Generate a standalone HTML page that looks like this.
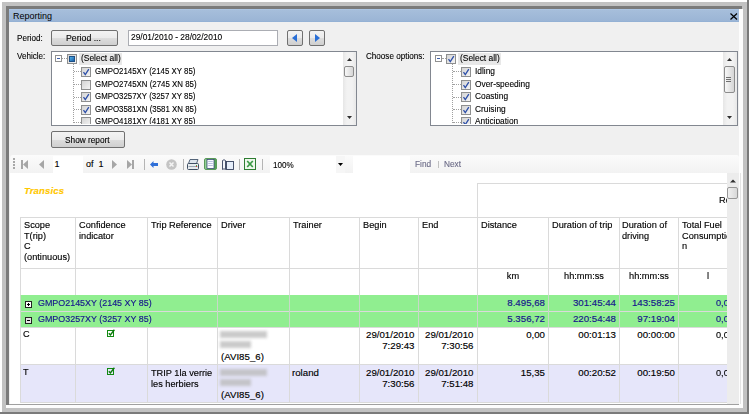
<!DOCTYPE html><html><head><meta charset="utf-8"><style>
*{margin:0;padding:0;box-sizing:border-box;}
html,body{width:749px;height:414px;overflow:hidden;background:#fff;}
body{position:relative;font-family:"Liberation Sans",sans-serif;color:#000;}
.a{position:absolute;}
.t{position:absolute;white-space:nowrap;line-height:1;transform-origin:0 0;}
.ui{font-size:9px;-webkit-text-stroke-width:0.12px;}
.btn{position:absolute;border:1px solid #707070;border-radius:2px;background:linear-gradient(#f3f3f3 0%,#ebebeb 50%,#dddddd 51%,#cfcfcf 100%);}
.box{position:absolute;background:#fff;border:1px solid #abadb3;}
.cb{position:absolute;width:10px;height:10px;border:1px solid #8e8f8f;background:linear-gradient(135deg,#d4d4d4,#f4f4f4);}
.cb svg{position:absolute;left:0px;top:0px;}
svg{display:block;}
.exp{position:absolute;width:7px;height:7px;border:1px solid #919191;background:#fff;}
.exp i{position:absolute;left:1px;top:2px;width:3px;height:1px;background:#3c5ea8;}
.vl{position:absolute;width:0;border-left:1px dotted #a0a0a0;}
.hl{position:absolute;height:0;border-top:1px dotted #a0a0a0;}
.g{position:absolute;background:#d3d3d3;}
.tb{position:absolute;white-space:nowrap;line-height:10.7px;font-size:9.7px;-webkit-text-stroke-width:0.15px;transform-origin:0 0;}
</style></head><body>
<div class="a" style="left:2px;top:2px;width:745px;height:410px;background:#c2c2c2;"></div>
<div class="a" style="left:747px;top:0;width:2px;height:414px;background:#7a7a7a;"></div>
<div class="a" style="left:0;top:412px;width:749px;height:2px;background:#7a7a7a;"></div>
<div class="a" style="left:6px;top:6px;width:736px;height:3px;background:#7b7b7b;"></div>
<div class="a" style="left:6px;top:6px;width:3px;height:399px;background:#7b7b7b;"></div>
<div class="a" style="left:739px;top:9px;width:4px;height:399px;background:#fdfdfd;"></div>
<div class="a" style="left:6px;top:405px;width:736px;height:3px;background:#fdfdfd;"></div>
<div class="a" style="left:9px;top:9px;width:730px;height:396px;background:#f0f0f0;"></div>
<div class="a" style="left:9px;top:9px;width:730px;height:13px;background:linear-gradient(#b2ccec 0px,#a6bedb 1px,#9bb5d5 12px,#8eaed4 13px);"></div>
<div class="t t" style="left:13px;top:12px;font-size:9px;">Reporting</div>
<svg class="a" style="left:730px;top:13px" width="8" height="7" viewBox="0 0 8 7"><path d="M0.5 0.5L7 6.5M7 0.5L0.5 6.5" stroke="#000" stroke-width="1.2"/></svg>
<div class="t ui" style="left:17px;top:34px;transform:scaleX(0.9);">Period:</div>
<div class="btn" style="left:51px;top:30px;width:67px;height:16px;"></div>
<div class="t ui" style="left:66px;top:34px;transform:scaleX(0.97);">Period ...</div>
<div class="box" style="left:128px;top:30px;width:150px;height:16px;"></div>
<div class="t ui" style="left:131px;top:33px;transform:scaleX(0.93);">29/01/2010 - 28/02/2010</div>
<div class="btn" style="left:287px;top:30px;width:16px;height:16px;"></div>
<svg class="a" style="left:292px;top:34px" width="6" height="8"><path d="M5 0L0 4L5 8Z" fill="#2a6fd6"/></svg>
<div class="btn" style="left:309px;top:30px;width:16px;height:16px;"></div>
<svg class="a" style="left:315px;top:34px" width="6" height="8"><path d="M0 0L5 4L0 8Z" fill="#2a6fd6"/></svg>
<div class="t ui" style="left:17px;top:52px;transform:scaleX(0.9);">Vehicle:</div>
<div class="t ui" style="left:365.5px;top:52px;transform:scaleX(0.9);">Choose options:</div>
<div class="box" style="left:51px;top:51px;width:306px;height:75px;border-color:#828790;overflow:hidden;"></div>
<div class="a" style="left:52px;top:52px;width:304px;height:72px;overflow:hidden;">
<div class="exp" style="left:3px;top:3px;"><i></i></div>
<div class="hl" style="left:10px;top:6px;width:5px;"></div>
<div class="a" style="left:27px;top:1px;width:43px;height:12px;background:#e8e8e8;"></div>
<div class="cb" style="left:15px;top:2px;"><div class="a" style="left:1px;top:1px;width:6px;height:6px;background:linear-gradient(135deg,#4fb0e8,#1a5fa8);border:1px solid #1d4f86;"></div></div>
<div class="t ui" style="left:29px;top:2px;transform:scaleX(0.935);">(Select all)</div>
<div class="vl" style="left:21px;top:12px;height:75px;"></div>
<div class="hl" style="left:22px;top:19px;width:7px;"></div>
<div class="cb" style="left:29px;top:15px;"><svg width="8" height="8" viewBox="0 0 8 8"><path d="M1.5 4.2L3.3 6.6L6.8 1.2" stroke="#2d4fa8" stroke-width="1.3" fill="none"/></svg></div>
<div class="t ui" style="left:43px;top:15px;transform:scaleX(0.875);">GMPO2145XY (2145 XY 85)</div>
<div class="hl" style="left:22px;top:32px;width:7px;"></div>
<div class="cb" style="left:29px;top:28px;"></div>
<div class="t ui" style="left:43px;top:28px;transform:scaleX(0.875);">GMPO2745XN (2745 XN 85)</div>
<div class="hl" style="left:22px;top:45px;width:7px;"></div>
<div class="cb" style="left:29px;top:40px;"><svg width="8" height="8" viewBox="0 0 8 8"><path d="M1.5 4.2L3.3 6.6L6.8 1.2" stroke="#2d4fa8" stroke-width="1.3" fill="none"/></svg></div>
<div class="t ui" style="left:43px;top:40px;transform:scaleX(0.875);">GMPO3257XY (3257 XY 85)</div>
<div class="hl" style="left:22px;top:57px;width:7px;"></div>
<div class="cb" style="left:29px;top:53px;"><svg width="8" height="8" viewBox="0 0 8 8"><path d="M1.5 4.2L3.3 6.6L6.8 1.2" stroke="#2d4fa8" stroke-width="1.3" fill="none"/></svg></div>
<div class="t ui" style="left:43px;top:53px;transform:scaleX(0.875);">GMPO3581XN (3581 XN 85)</div>
<div class="hl" style="left:22px;top:70px;width:7px;"></div>
<div class="cb" style="left:29px;top:65px;"></div>
<div class="t ui" style="left:43px;top:65px;transform:scaleX(0.875);">GMPO4181XY (4181 XY 85)</div>
</div>
<div class="a" style="left:343px;top:52px;width:13px;height:73px;background:linear-gradient(90deg,#e6e6e6,#f2f2f2 30%,#f2f2f2 70%,#e8e8e8);"></div>
<svg class="a" style="left:347px;top:58px" width="5" height="3"><path d="M0 3L2.5 0L5 3Z" fill="#303030"/></svg>
<svg class="a" style="left:347px;top:116px" width="5" height="3"><path d="M0 0L2.5 3L5 0Z" fill="#303030"/></svg>
<div class="a" style="left:344px;top:66px;width:10px;height:11px;border:1px solid #8c8c8c;border-radius:2px;background:linear-gradient(90deg,#f7f7f7,#e6e6e6 50%,#d6d6d6);"></div>
<div class="box" style="left:430px;top:51px;width:308px;height:75px;border-color:#828790;overflow:hidden;"></div>
<div class="a" style="left:431px;top:52px;width:306px;height:72px;overflow:hidden;">
<div class="exp" style="left:4px;top:3px;"><i></i></div>
<div class="hl" style="left:11px;top:6px;width:4px;"></div>
<div class="a" style="left:27px;top:1px;width:43px;height:12px;background:#e8e8e8;"></div>
<div class="cb" style="left:15px;top:2px;"><svg width="8" height="8" viewBox="0 0 8 8"><path d="M1.5 4.2L3.3 6.6L6.8 1.2" stroke="#2d4fa8" stroke-width="1.3" fill="none"/></svg></div>
<div class="t ui" style="left:28.5px;top:2px;transform:scaleX(0.935);">(Select all)</div>
<div class="vl" style="left:21px;top:12px;height:75px;"></div>
<div class="hl" style="left:22px;top:19px;width:8px;"></div>
<div class="cb" style="left:30px;top:15px;"><svg width="8" height="8" viewBox="0 0 8 8"><path d="M1.5 4.2L3.3 6.6L6.8 1.2" stroke="#2d4fa8" stroke-width="1.3" fill="none"/></svg></div>
<div class="t ui" style="left:43.5px;top:15px;transform:scaleX(0.93);">Idling</div>
<div class="hl" style="left:22px;top:32px;width:8px;"></div>
<div class="cb" style="left:30px;top:28px;"><svg width="8" height="8" viewBox="0 0 8 8"><path d="M1.5 4.2L3.3 6.6L6.8 1.2" stroke="#2d4fa8" stroke-width="1.3" fill="none"/></svg></div>
<div class="t ui" style="left:43.5px;top:28px;transform:scaleX(0.93);">Over-speeding</div>
<div class="hl" style="left:22px;top:45px;width:8px;"></div>
<div class="cb" style="left:30px;top:40px;"><svg width="8" height="8" viewBox="0 0 8 8"><path d="M1.5 4.2L3.3 6.6L6.8 1.2" stroke="#2d4fa8" stroke-width="1.3" fill="none"/></svg></div>
<div class="t ui" style="left:43.5px;top:40px;transform:scaleX(0.93);">Coasting</div>
<div class="hl" style="left:22px;top:57px;width:8px;"></div>
<div class="cb" style="left:30px;top:53px;"><svg width="8" height="8" viewBox="0 0 8 8"><path d="M1.5 4.2L3.3 6.6L6.8 1.2" stroke="#2d4fa8" stroke-width="1.3" fill="none"/></svg></div>
<div class="t ui" style="left:43.5px;top:53px;transform:scaleX(0.93);">Cruising</div>
<div class="hl" style="left:22px;top:70px;width:8px;"></div>
<div class="cb" style="left:30px;top:65px;"><svg width="8" height="8" viewBox="0 0 8 8"><path d="M1.5 4.2L3.3 6.6L6.8 1.2" stroke="#2d4fa8" stroke-width="1.3" fill="none"/></svg></div>
<div class="t ui" style="left:43.5px;top:65px;transform:scaleX(0.93);">Anticipation</div>
</div>
<div class="a" style="left:723px;top:52px;width:14px;height:73px;background:linear-gradient(90deg,#e6e6e6,#f2f2f2 30%,#f2f2f2 70%,#e8e8e8);"></div>
<svg class="a" style="left:727px;top:58px" width="5" height="3"><path d="M0 3L2.5 0L5 3Z" fill="#303030"/></svg>
<svg class="a" style="left:727px;top:116px" width="5" height="3"><path d="M0 0L2.5 3L5 0Z" fill="#303030"/></svg>
<div class="a" style="left:724px;top:66px;width:11px;height:27px;border:1px solid #8c8c8c;border-radius:2px;background:linear-gradient(90deg,#f7f7f7,#e6e6e6 50%,#d6d6d6);"></div>
<div class="a" style="left:726px;top:77px;width:5px;height:1px;background:#707070;"></div>
<div class="a" style="left:726px;top:79px;width:5px;height:1px;background:#707070;"></div>
<div class="a" style="left:726px;top:81px;width:5px;height:1px;background:#707070;"></div>
<div class="btn" style="left:51px;top:131px;width:74px;height:17px;"></div>
<div class="t ui" style="left:65px;top:136px;transform:scaleX(0.92);">Show report</div>
<div class="a" style="left:10px;top:155px;width:729px;height:18px;background:linear-gradient(#f9f9f9,#f3f3f3);border-radius:3px 3px 0 0;"></div>
<div class="a" style="left:10px;top:173px;width:729px;height:231px;background:#fff;"></div>
<div class="a" style="left:9px;top:404px;width:730px;height:1px;background:#a0a0a0;"></div>
<div class="a" style="left:11px;top:155px;width:728px;height:18px;background:linear-gradient(#fbfbfb,#f2f2f2);border-radius:3px 3px 0 0;"></div>
<div class="a" style="left:13px;top:158px;width:2px;height:2px;background:#a8a8a8;"></div>
<div class="a" style="left:13px;top:161px;width:2px;height:2px;background:#a8a8a8;"></div>
<div class="a" style="left:13px;top:164px;width:2px;height:2px;background:#a8a8a8;"></div>
<div class="a" style="left:13px;top:167px;width:2px;height:2px;background:#a8a8a8;"></div>
<div class="a" style="left:21px;top:160px;width:2px;height:9px;background:#a6a6a6;"></div>
<svg class="a" style="left:23px;top:160px" width="5" height="9"><path d="M5 0L0 4.5L5 9Z" fill="#a6a6a6"/></svg>
<svg class="a" style="left:39px;top:160px" width="5" height="9"><path d="M5 0L0 4.5L5 9Z" fill="#a6a6a6"/></svg>
<div class="a" style="left:53px;top:156px;width:30px;height:17px;background:#fff;"></div>
<div class="t ui" style="left:54.5px;top:160px;">1</div>
<div class="t ui" style="left:86px;top:160px;">of</div>
<div class="t ui" style="left:98.5px;top:160px;">1</div>
<svg class="a" style="left:112px;top:160px" width="5" height="9"><path d="M0 0L5 4.5L0 9Z" fill="#a6a6a6"/></svg>
<svg class="a" style="left:127px;top:160px" width="5" height="9"><path d="M0 0L5 4.5L0 9Z" fill="#a6a6a6"/></svg>
<div class="a" style="left:132px;top:160px;width:2px;height:9px;background:#a6a6a6;"></div>
<div class="a" style="left:144px;top:159px;width:1px;height:11px;background:#b4b4b4;"></div>
<div class="a" style="left:183px;top:159px;width:1px;height:11px;background:#b4b4b4;"></div>
<div class="a" style="left:239px;top:159px;width:1px;height:11px;background:#b4b4b4;"></div>
<div class="a" style="left:262px;top:159px;width:1px;height:11px;background:#b4b4b4;"></div>
<svg class="a" style="left:150px;top:161px" width="8" height="7" viewBox="0 0 8 7"><path d="M0 3.5L3.5 0V2H8V5H3.5V7Z" fill="#2f6fd8"/></svg>
<svg class="a" style="left:166px;top:159px" width="11" height="11" viewBox="0 0 11 11"><circle cx="5.5" cy="5.5" r="5.3" fill="#c4c4c4"/><path d="M3.5 3.5L7.5 7.5M7.5 3.5L3.5 7.5" stroke="#f4f4f4" stroke-width="1.5"/></svg>
<svg class="a" style="left:187px;top:159px" width="12" height="11" viewBox="0 0 12 11"><path d="M3 0.5H11L9.5 4.5H1.5Z" fill="#dfe6ee" stroke="#55657a" stroke-width="1"/><rect x="0.5" y="4.5" width="11" height="6" rx="1" fill="#e8ecef" stroke="#3f4f63"/><rect x="1.5" y="7" width="9" height="1" fill="#9aa6b2"/><rect x="9" y="6" width="1" height="1" fill="#3fb33f"/><rect x="9" y="7" width="1" height="1" fill="#d33"/></svg>
<svg class="a" style="left:204px;top:158px" width="13" height="12" viewBox="0 0 13 12"><defs><linearGradient id="gp" x1="0" x2="1"><stop offset="0" stop-color="#9ad69a"/><stop offset="1" stop-color="#4f9f4f"/></linearGradient></defs><rect x="0.5" y="0.5" width="12" height="11" rx="1.5" fill="url(#gp)" stroke="#5a9a5a"/><rect x="3" y="1.5" width="7" height="9" fill="#fafbff" stroke="#2a3a70" stroke-width="0.7"/><path d="M4.2 3.5H8.8M4.2 5.5H8.8M4.2 7.5H8.8" stroke="#a8b4d8" stroke-width="0.8"/></svg>
<svg class="a" style="left:222px;top:159px" width="12" height="11" viewBox="0 0 12 11"><path d="M0.5 10.5V1.5Q2 0 3.5 1.5V10.5Q2 9 0.5 10.5Z" fill="#f2f5fb" stroke="#34405c" stroke-width="0.9"/><rect x="4.5" y="2.5" width="7" height="8" fill="#e6eefa" stroke="#34405c" stroke-width="0.9"/></svg>
<svg class="a" style="left:244px;top:158px" width="12" height="12" viewBox="0 0 12 12"><rect x="0.5" y="0.5" width="11" height="11" fill="#eef7ec" stroke="#2e7d32"/><path d="M3.2 3L8.8 9M8.8 3L3.2 9" stroke="#3a9a45" stroke-width="1.7"/></svg>
<div class="a" style="left:270px;top:156px;width:75px;height:17px;background:#fff;"></div>
<div class="a" style="left:336px;top:156px;width:9px;height:17px;background:#f6f6f6;"></div>
<svg class="a" style="left:338px;top:163px" width="5" height="3"><path d="M0 0H5L2.5 3Z" fill="#000"/></svg>
<div class="t ui" style="left:273px;top:161px;transform:scaleX(0.9);">100%</div>
<div class="a" style="left:353px;top:156px;width:57px;height:17px;background:#fff;"></div>
<div class="t ui" style="left:415px;top:160px;transform:scaleX(0.92);color:#6a6a86;">Find</div>
<div class="a" style="left:438px;top:161px;width:1px;height:7px;background:#c0c0c0;"></div>
<div class="t ui" style="left:444px;top:160px;transform:scaleX(0.92);color:#6a6a86;">Next</div>
<div class="tb" style="left:24px;top:186px;color:#ffc800;font-size:9.6px;letter-spacing:0.1px;"><b><i>Transics</i></b></div>
<div class="a" style="left:0;top:0;width:727px;height:414px;overflow:hidden;">
<div class="a" style="left:477px;top:183px;width:250px;height:1px;background:#dadada;"></div>
<div class="a" style="left:477px;top:183px;width:1px;height:34px;background:#dadada;"></div>
<div class="tb" style="left:719px;top:195px;transform:scaleX(0.95);">Re</div>
<div class="a" style="left:20px;top:295px;width:707px;height:16px;background:#90ee90;"></div>
<div class="a" style="left:20px;top:312px;width:707px;height:15px;background:#90ee90;"></div>
<div class="a" style="left:20px;top:365px;width:707px;height:37px;background:#e6e6fa;"></div>
<div class="a" style="left:20px;top:217px;width:707px;height:1px;background:#dadada;"></div>
<div class="a" style="left:20px;top:268px;width:707px;height:1px;background:#dadada;"></div>
<div class="a" style="left:20px;top:311px;width:707px;height:1px;background:#dadada;"></div>
<div class="a" style="left:20px;top:327px;width:707px;height:1px;background:#dadada;"></div>
<div class="a" style="left:20px;top:364px;width:707px;height:1px;background:#dadada;"></div>
<div class="a" style="left:20px;top:402px;width:707px;height:1px;background:#dadada;"></div>
<div class="a" style="left:20px;top:217px;width:1px;height:78px;background:#dadada;"></div>
<div class="a" style="left:20px;top:327px;width:1px;height:75px;background:#dadada;"></div>
<div class="a" style="left:75px;top:217px;width:1px;height:78px;background:#dadada;"></div>
<div class="a" style="left:75px;top:327px;width:1px;height:75px;background:#dadada;"></div>
<div class="a" style="left:147px;top:217px;width:1px;height:78px;background:#dadada;"></div>
<div class="a" style="left:147px;top:327px;width:1px;height:75px;background:#dadada;"></div>
<div class="a" style="left:217px;top:217px;width:1px;height:78px;background:#dadada;"></div>
<div class="a" style="left:217px;top:327px;width:1px;height:75px;background:#dadada;"></div>
<div class="a" style="left:289px;top:217px;width:1px;height:78px;background:#dadada;"></div>
<div class="a" style="left:289px;top:327px;width:1px;height:75px;background:#dadada;"></div>
<div class="a" style="left:359px;top:217px;width:1px;height:78px;background:#dadada;"></div>
<div class="a" style="left:359px;top:327px;width:1px;height:75px;background:#dadada;"></div>
<div class="a" style="left:418px;top:217px;width:1px;height:78px;background:#dadada;"></div>
<div class="a" style="left:418px;top:327px;width:1px;height:75px;background:#dadada;"></div>
<div class="a" style="left:477px;top:217px;width:1px;height:78px;background:#dadada;"></div>
<div class="a" style="left:477px;top:327px;width:1px;height:75px;background:#dadada;"></div>
<div class="a" style="left:548px;top:217px;width:1px;height:78px;background:#dadada;"></div>
<div class="a" style="left:548px;top:327px;width:1px;height:75px;background:#dadada;"></div>
<div class="a" style="left:619px;top:217px;width:1px;height:78px;background:#dadada;"></div>
<div class="a" style="left:619px;top:327px;width:1px;height:75px;background:#dadada;"></div>
<div class="a" style="left:678px;top:217px;width:1px;height:78px;background:#dadada;"></div>
<div class="a" style="left:678px;top:327px;width:1px;height:75px;background:#dadada;"></div>
<div class="a" style="left:217px;top:295px;width:1px;height:32px;background:#c8d8c8;"></div>
<div class="a" style="left:289px;top:295px;width:1px;height:32px;background:#c8d8c8;"></div>
<div class="a" style="left:359px;top:295px;width:1px;height:32px;background:#c8d8c8;"></div>
<div class="a" style="left:418px;top:295px;width:1px;height:32px;background:#c8d8c8;"></div>
<div class="a" style="left:477px;top:295px;width:1px;height:32px;background:#c8d8c8;"></div>
<div class="a" style="left:548px;top:295px;width:1px;height:32px;background:#c8d8c8;"></div>
<div class="a" style="left:619px;top:295px;width:1px;height:32px;background:#c8d8c8;"></div>
<div class="a" style="left:678px;top:295px;width:1px;height:32px;background:#c8d8c8;"></div>
<div class="a" style="left:20px;top:295px;width:1px;height:32px;background:#c4dcc4;"></div>
<div class="tb" style="left:24px;top:220px;transform:scaleX(0.95);">Scope<br>T(rip)<br>C<br>(ontinuous)</div>
<div class="tb" style="left:79px;top:220px;transform:scaleX(0.95);">Confidence<br>indicator</div>
<div class="tb" style="left:151px;top:220px;transform:scaleX(0.95);">Trip Reference</div>
<div class="tb" style="left:221px;top:220px;transform:scaleX(0.95);">Driver</div>
<div class="tb" style="left:293px;top:220px;transform:scaleX(0.95);">Trainer</div>
<div class="tb" style="left:363px;top:220px;transform:scaleX(0.95);">Begin</div>
<div class="tb" style="left:422px;top:220px;transform:scaleX(0.95);">End</div>
<div class="tb" style="left:481px;top:220px;transform:scaleX(0.95);">Distance</div>
<div class="tb" style="left:552px;top:220px;transform:scaleX(0.95);">Duration of trip</div>
<div class="tb" style="left:622px;top:220px;transform:scaleX(0.95);">Duration of<br>driving</div>
<div class="tb" style="left:682px;top:220px;transform:scaleX(0.95);">Total Fuel<br>Consumptio<br>n</div>
<div class="tb" style="left:413px;top:271px;width:200px;text-align:center;transform:scaleX(0.95);transform-origin:50% 0;">km</div>
<div class="tb" style="left:483.5px;top:271px;width:200px;text-align:center;transform:scaleX(0.95);transform-origin:50% 0;">hh:mm:ss</div>
<div class="tb" style="left:548.5px;top:271px;width:200px;text-align:center;transform:scaleX(0.95);transform-origin:50% 0;">hh:mm:ss</div>
<div class="tb" style="left:607.5px;top:271px;width:200px;text-align:center;transform:scaleX(0.95);transform-origin:50% 0;">l</div>
<div class="a" style="left:25px;top:301px;width:7px;height:7px;border:1px solid #222;background:#fff;"></div>
<div class="a" style="left:27px;top:304px;width:3px;height:1px;background:#000;"></div>
<div class="a" style="left:28px;top:303px;width:1px;height:3px;background:#000;"></div>
<div class="tb" style="left:38px;top:298px;transform:scaleX(0.92);color:#14148c;">GMPO2145XY (2145 XY 85)</div>
<div class="tb" style="left:345px;top:298px;width:200px;text-align:right;transform:scaleX(1.0);transform-origin:100% 0;color:#14148c;">8.495,68</div>
<div class="tb" style="left:416px;top:298px;width:200px;text-align:right;transform:scaleX(1.0);transform-origin:100% 0;color:#14148c;">301:45:44</div>
<div class="tb" style="left:475px;top:298px;width:200px;text-align:right;transform:scaleX(1.0);transform-origin:100% 0;color:#14148c;">143:58:25</div>
<div class="tb" style="left:716px;top:298px;transform:scaleX(0.95);color:#14148c;">0,00</div>
<div class="a" style="left:25px;top:317px;width:7px;height:7px;border:1px solid #222;background:#e4e4e4;"></div>
<div class="a" style="left:27px;top:320px;width:3px;height:1px;background:#000;"></div>
<div class="tb" style="left:38px;top:314px;transform:scaleX(0.92);color:#14148c;">GMPO3257XY (3257 XY 85)</div>
<div class="tb" style="left:345px;top:314px;width:200px;text-align:right;transform:scaleX(1.0);transform-origin:100% 0;color:#14148c;">5.356,72</div>
<div class="tb" style="left:416px;top:314px;width:200px;text-align:right;transform:scaleX(1.0);transform-origin:100% 0;color:#14148c;">220:54:48</div>
<div class="tb" style="left:475px;top:314px;width:200px;text-align:right;transform:scaleX(1.0);transform-origin:100% 0;color:#14148c;">97:19:04</div>
<div class="tb" style="left:716px;top:314px;transform:scaleX(0.95);color:#14148c;">0,00</div>
<div class="tb" style="left:23px;top:329px;transform:scaleX(0.95);">C</div>
<div class="a" style="left:107px;top:329px;width:8px;height:8px;"><svg width="8" height="8" viewBox="0 0 8 8"><rect x="0.5" y="1.5" width="6" height="6" fill="none" stroke="#118a11"/><path d="M1.8 4.2L3.4 6L7.4 0.8" stroke="#0c7a0c" stroke-width="1.4" fill="none"/></svg></div>
<div class="a" style="left:220px;top:331px;width:47px;height:7px;background:#b9b9b9;filter:blur(1.6px);opacity:.75;"></div>
<div class="a" style="left:220px;top:341px;width:31px;height:7px;background:#b9b9b9;filter:blur(1.6px);opacity:.75;"></div>
<div class="tb" style="left:221px;top:352px;">(AVI85_6)</div>
<div class="tb" style="left:214.5px;top:330px;width:200px;text-align:right;transform:scaleX(1.0);transform-origin:100% 0;">29/01/2010<br>7:29:43</div>
<div class="tb" style="left:273.5px;top:330px;width:200px;text-align:right;transform:scaleX(1.0);transform-origin:100% 0;">29/01/2010<br>7:30:56</div>
<div class="tb" style="left:345px;top:330px;width:200px;text-align:right;transform:scaleX(1.0);transform-origin:100% 0;">0,00</div>
<div class="tb" style="left:416px;top:330px;width:200px;text-align:right;transform:scaleX(1.0);transform-origin:100% 0;">00:01:13</div>
<div class="tb" style="left:475px;top:330px;width:200px;text-align:right;transform:scaleX(1.0);transform-origin:100% 0;">00:00:00</div>
<div class="tb" style="left:716px;top:330px;transform:scaleX(0.95);">0,00</div>
<div class="tb" style="left:23px;top:367px;transform:scaleX(0.95);">T</div>
<div class="a" style="left:107px;top:367px;width:8px;height:8px;"><svg width="8" height="8" viewBox="0 0 8 8"><rect x="0.5" y="1.5" width="6" height="6" fill="none" stroke="#118a11"/><path d="M1.8 4.2L3.4 6L7.4 0.8" stroke="#0c7a0c" stroke-width="1.4" fill="none"/></svg></div>
<div class="tb" style="left:151px;top:368px;transform:scaleX(0.95);">TRIP 1la verrie<br>les herbiers</div>
<div class="tb" style="left:292px;top:368px;">roland</div>
<div class="a" style="left:220px;top:369px;width:47px;height:7px;background:#b9b9b9;filter:blur(1.6px);opacity:.75;"></div>
<div class="a" style="left:220px;top:379px;width:31px;height:7px;background:#b9b9b9;filter:blur(1.6px);opacity:.75;"></div>
<div class="tb" style="left:221px;top:390px;">(AVI85_6)</div>
<div class="tb" style="left:214.5px;top:368px;width:200px;text-align:right;transform:scaleX(1.0);transform-origin:100% 0;">29/01/2010<br>7:30:56</div>
<div class="tb" style="left:273.5px;top:368px;width:200px;text-align:right;transform:scaleX(1.0);transform-origin:100% 0;">29/01/2010<br>7:51:48</div>
<div class="tb" style="left:345px;top:368px;width:200px;text-align:right;transform:scaleX(1.0);transform-origin:100% 0;">15,35</div>
<div class="tb" style="left:416px;top:368px;width:200px;text-align:right;transform:scaleX(1.0);transform-origin:100% 0;">00:20:52</div>
<div class="tb" style="left:475px;top:368px;width:200px;text-align:right;transform:scaleX(1.0);transform-origin:100% 0;">00:19:50</div>
<div class="tb" style="left:716px;top:368px;transform:scaleX(0.95);">0,00</div>
</div>
<div class="a" style="left:727px;top:173px;width:12px;height:231px;background:#ececec;"></div>
<svg class="a" style="left:730px;top:179px" width="6" height="4"><path d="M0 3.5L3 0.5L6 3.5Z" fill="#303030"/></svg>
<div class="a" style="left:727px;top:187px;width:11px;height:12px;border:1px solid #979797;border-radius:2px;background:linear-gradient(90deg,#f0f0f0,#d8d8d8);"></div>
<div class="a" style="left:740px;top:173px;width:1px;height:231px;background:#e4e4e4;"></div>
</body></html>
